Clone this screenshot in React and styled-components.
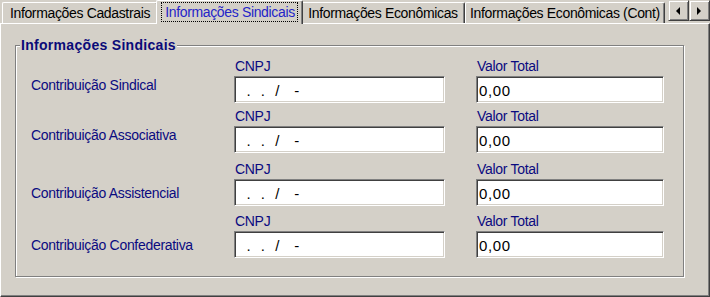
import React from "react";
import styled, { createGlobalStyle } from "styled-components";

const Global = createGlobalStyle`
  html, body { margin: 0; padding: 0; background: #d4d0c8; }
  body { font-family: "Liberation Sans", Arial, sans-serif; }
  * { box-sizing: border-box; }
`;

const Window = styled.div`
  width: 710px;
  height: 297px;
  background: #d4d0c8;
  display: flex;
  flex-direction: column;
  overflow: hidden;
`;

const TabStrip = styled.div`
  height: 23px;
  display: flex;
  align-items: flex-end;
  padding-left: 2px;
  position: relative;
  z-index: 1;
`;

const Tab = styled.div`
  width: ${(p) => p.$width}px;
  height: ${(p) => (p.$active ? 24 : 21)}px;
  margin: ${(p) => (p.$active ? "0 -2px -1px -2px" : "0")};
  display: flex;
  align-items: center;
  justify-content: center;
  background: #d4d0c8;
  border-top: 1px solid #fff;
  border-left: 1px solid #fff;
  border-right: 1px solid #404040;
  box-shadow: inset -1px 0 0 #808080;
  border-top-left-radius: 2px;
  border-top-right-radius: 2px;
  font-size: 14px;
  letter-spacing: -0.35px;
  color: ${(p) => (p.$active ? "#2424c8" : "#000")};
  white-space: nowrap;
  position: relative;
  z-index: ${(p) => (p.$active ? 2 : 0)};
  padding-bottom: ${(p) => (p.$active ? 2 : 0)}px;
`;

const FocusRing = styled.span`
  display: flex;
  align-items: center;
  height: 18px;
  padding: 0 2px 0 3px;
  outline: 1px dotted #000;
`;

const ScrollButtons = styled.div`
  align-self: flex-start;
  margin-left: auto;
  display: flex;
`;

const ArrowButton = styled.div`
  width: 21px;
  height: 21px;
  display: flex;
  align-items: center;
  justify-content: center;
  background: #d4d0c8;
  border-top: 1px solid #d4d0c8;
  border-left: 1px solid #d4d0c8;
  border-right: 1px solid #404040;
  border-bottom: 1px solid #404040;
  box-shadow: inset 1px 1px 0 #fff, inset -1px -1px 0 #808080;
`;

const Panel = styled.div`
  flex: 1;
  border-top: 1px solid #fff;
  border-left: 1px solid #fff;
  border-right: 1px solid #404040;
  border-bottom: 1px solid #404040;
  box-shadow: inset -1px -1px 0 #808080;
  padding: 21px 0 0 14px;
`;

const GroupBox = styled.div`
  position: relative;
  width: 669px;
  height: 232px;
  border: 1px solid #808080;
  box-shadow: 1px 1px 0 #fff, inset 1px 1px 0 #fff;
  padding: 13px 0 0 15px;
`;

const GroupTitle = styled.span`
  position: absolute;
  top: -9px;
  left: 4px;
  padding: 0 1px;
  line-height: 16px;
  background: #d4d0c8;
  font-size: 14px;
  font-weight: bold;
  letter-spacing: 0.3px;
  color: #0a0a78;
  white-space: nowrap;
`;

const Row = styled.div`
  display: grid;
  grid-template-columns: 172px 211px 188px;
  column-gap: 31px;
  align-items: start;
  margin-top: ${(p) => p.$gap}px;
`;

const Caption = styled.span`
  margin-top: ${(p) => p.$offset}px;
  font-size: 14px;
  line-height: 16px;
  letter-spacing: -0.3px;
  color: #0a0a80;
  white-space: nowrap;
`;

const Field = styled.div`
  display: flex;
  flex-direction: column;
  gap: 2px;
`;

const FieldLabel = styled.span`
  font-size: 14px;
  line-height: 15px;
  letter-spacing: -0.3px;
  color: #0a0a80;
  padding-left: 1px;
`;

const TextBox = styled.input`
  width: 100%;
  height: 27px;
  margin: 0;
  border-top: 1px solid #808080;
  border-left: 1px solid #808080;
  border-right: 1px solid #fff;
  border-bottom: 1px solid #fff;
  box-shadow: inset 1px 1px 0 #404040, inset -1px -1px 0 #d4d0c8;
  border-radius: 0;
  background: #fff;
  padding: 1px 0 0 2px;
  font-family: "Liberation Sans", Arial, sans-serif;
  font-size: 15px;
  letter-spacing: 0.6px;
  color: #000;
  outline: none;
  white-space: pre;
`;

const rows = [
  { label: "Contribuição Sindical", gap: 0, offset: 18 },
  { label: "Contribuição Associativa", gap: 6, offset: 18 },
  { label: "Contribuição Assistencial", gap: 9, offset: 23 },
  { label: "Contribuição Confederativa", gap: 8, offset: 23 },
];

const Arrow = ({ dir }) => (
  <svg width="5" height="8" viewBox="0 0 5 8">
    {dir === "left" ? (
      <polygon points="4,0 4,8 0,4" fill="#000" />
    ) : (
      <polygon points="0,0 0,8 4,4" fill="#000" />
    )}
  </svg>
);

export default function App() {
  return (
    <>
      <Global />
      <Window>
        <TabStrip>
          <Tab $width={156}>Informações Cadastrais</Tab>
          <Tab $active $width={147}>
            <FocusRing>Informações Sindicais</FocusRing>
          </Tab>
          <Tab $width={164}>Informações Econômicas</Tab>
          <Tab $width={200}>Informações Econômicas (Cont)</Tab>
          <ScrollButtons>
            <ArrowButton>
              <Arrow dir="left" />
            </ArrowButton>
            <ArrowButton>
              <Arrow dir="right" />
            </ArrowButton>
          </ScrollButtons>
        </TabStrip>
        <Panel>
          <GroupBox>
            <GroupTitle>Informações Sindicais</GroupTitle>
            {rows.map((r) => (
              <Row key={r.label} $gap={r.gap}>
                <Caption $offset={r.offset}>{r.label}</Caption>
                <Field>
                  <FieldLabel>CNPJ</FieldLabel>
                  <TextBox readOnly value={"  .  .  /   -"} />
                </Field>
                <Field>
                  <FieldLabel>Valor Total</FieldLabel>
                  <TextBox readOnly value="0,00" />
                </Field>
              </Row>
            ))}
          </GroupBox>
        </Panel>
      </Window>
    </>
  );
}
